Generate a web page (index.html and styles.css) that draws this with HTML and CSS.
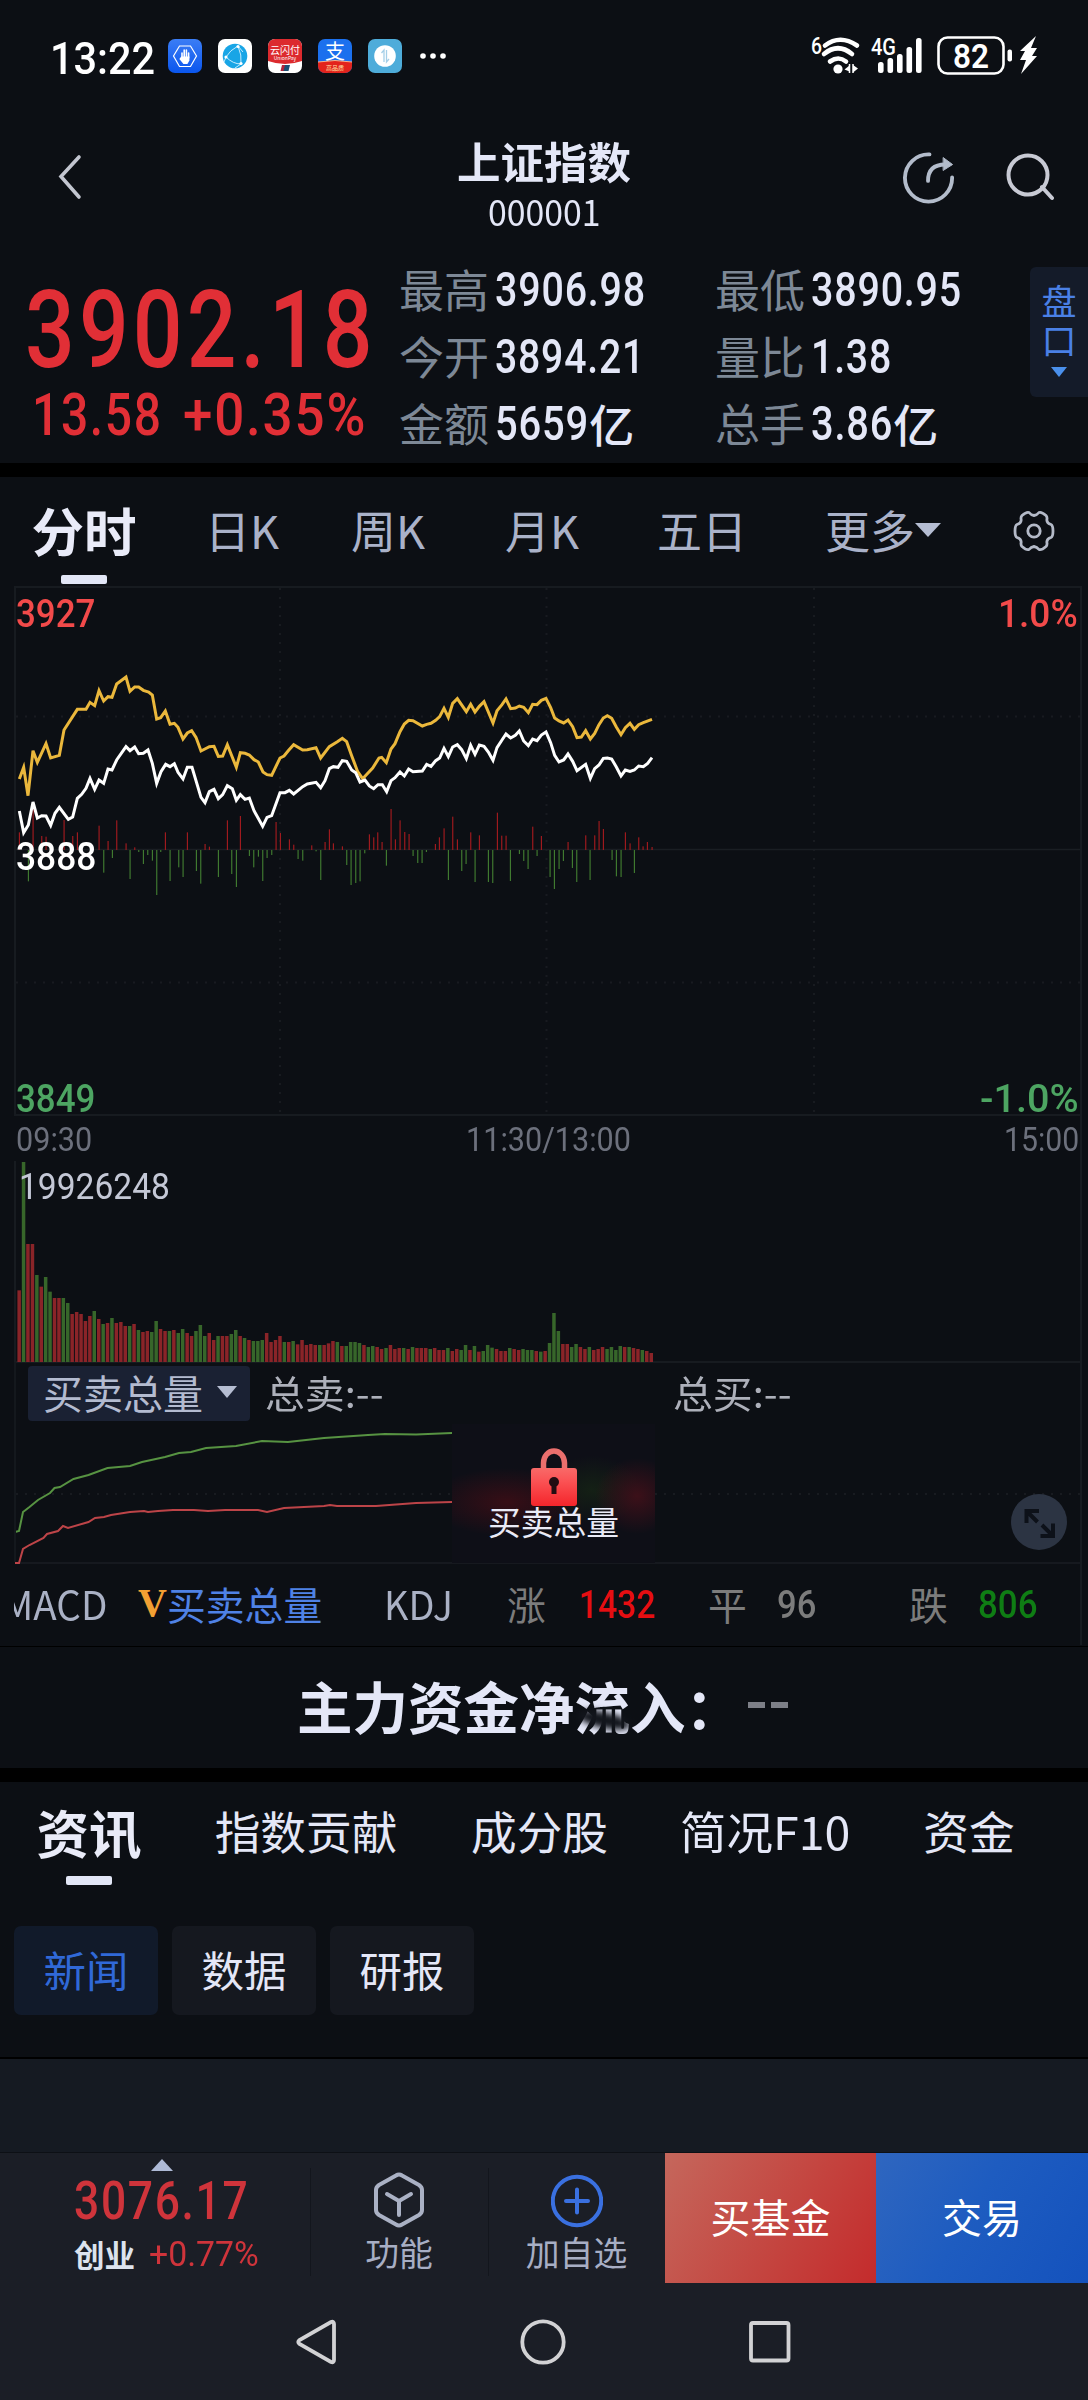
FILE: index.html
```
<!DOCTYPE html>
<html lang="zh-CN">
<head>
    <meta charset="UTF-8">
    <meta name="viewport" content="width=device-width, initial-scale=1.0">
    <title>上证指数 000001</title>
    <link rel="stylesheet" href="styles.css">
</head>
<body>
<div class="phone">

    <!-- Status bar -->
    <div class="status-bar">
        <span class="clock"><span class="num" data-w="105">13:22</span></span>
        <div class="app-icons">
            <svg viewBox="0 0 34 34"><defs><linearGradient id="gb" x2="0" y2="1"><stop stop-color="#3b7df5"/><stop offset="1" stop-color="#0a56ee"/></linearGradient></defs><rect width="34" height="34" rx="7" fill="url(#gb)"/><path d="M11.500 7h11l6 10-6 10.500h-11L5.500 17z" fill="none" stroke="#fff" stroke-width="1.200"/><path d="M14 20v-6M16.200 18v-7M18.400 18v-7M20.600 19v-5" stroke="#fff" stroke-width="1.600" stroke-linecap="round"/><path d="M13.200 17.500h8.200v4l-2 3.500h-4l-4-5z" fill="#fff"/></svg>
            <svg viewBox="0 0 34 34"><rect width="34" height="34" rx="7" fill="#fff"/><circle cx="17" cy="17" r="12.300" fill="#18a5e6"/><path d="M8 18Q12 11 20 7M8 18q7 7 15 7M20 7q4 9 3 18M20 7l5 6M8 18l-2 5M23 25l-6 4" fill="none" stroke="#c5ecff" stroke-width="1"/><circle cx="20" cy="7.500" r="1.600" fill="#fff"/><circle cx="8" cy="18" r="1.600" fill="#fff"/><circle cx="23" cy="24.500" r="1.600" fill="#fff"/></svg>
            <svg viewBox="0 0 34 34"><rect width="34" height="34" rx="7" fill="#fff"/><path d="M0 22V7a7 7 0 0 1 7-7h20a7 7 0 0 1 7 7v15q-17 6-34 0z" fill="#dc2a2e"/><text x="17" y="14.500" class="ic-text" font-size="10">云闪付</text><text x="17" y="20.500" class="ic-text" font-size="5">UnionPay</text><path d="M14 26h4l-1.500 6h-4z" fill="#b0263c"/><path d="M17 26h5l-1.500 6h-5z" fill="#1d4f74"/></svg>
            <svg viewBox="0 0 34 34"><rect width="34" height="34" rx="7" fill="#1b70ee"/><path d="M0 23q17-3 34 0v4a7 7 0 0 1-7 7H7a7 7 0 0 1-7-7z" fill="#e3231c"/><path d="M0 23q17-3 34 0" stroke="#f5b28c" fill="none"/><text x="17" y="20" class="ic-text" font-size="20">支</text><text x="17" y="31" class="ic-text gold" font-size="6">高品质</text></svg>
            <svg viewBox="0 0 34 34"><rect width="34" height="34" rx="7" fill="#4eacda"/><circle cx="17" cy="17" r="10.800" fill="#fff"/><path d="M13.500 14l2.500-3v12M18.500 11v12l2.500-3" fill="none" stroke="#a5cfe8" stroke-width="1.300"/></svg>
        </div>
        <svg class="dots" viewBox="0 0 26 6"><circle cx="3" cy="3" r="2.800"/><circle cx="13" cy="3" r="2.800"/><circle cx="23" cy="3" r="2.800"/></svg>
        <svg class="signals" viewBox="0 0 232 42">
            <text x="0" y="18" class="sig-text" font-size="23" textLength="11" lengthAdjust="spacingAndGlyphs">6</text>
            <g fill="none" stroke="#fff" stroke-width="4.600" stroke-linecap="round">
                <path d="M14 9.500q15-11.500 32 0"/>
                <path d="M13 18q14-11.500 28 0"/>
                <path d="M19 25.500q8.500-6 16 0"/>
            </g>
            <circle cx="27" cy="33" r="4.600"/>
            <path d="M38.500 28v9M42 28v9" stroke="#fff" stroke-width="1.500"/><path d="M33.500 33.500l5-4v6zM42 29l5 3.500-5 4z"/>
            <text x="60" y="18.500" class="sig-text" font-size="23" textLength="25" lengthAdjust="spacingAndGlyphs">4G</text>
            <rect x="67" y="26" width="5.600" height="11" rx="2.500"/>
            <rect x="76.500" y="22" width="5.600" height="15" rx="2.500"/>
            <rect x="86" y="18" width="5.600" height="19" rx="2.500"/>
            <rect x="95.500" y="11" width="5.600" height="26" rx="2.500"/>
            <rect x="105" y="2" width="5.600" height="35" rx="2.500"/>
            <rect x="127.500" y="1.500" width="65" height="36" rx="9" fill="none" stroke="#fff" stroke-width="2.600"/>
            <text x="142" y="31.500" class="sig-text bold" font-size="34" textLength="36" lengthAdjust="spacingAndGlyphs">82</text>
            <rect x="196.500" y="13.500" width="4.500" height="12" rx="2"/>
            <path d="M225 0l-16 15h5l-5 9h6l-5 14 16-18h-5l5-8h-6z"/>
        </svg>
    </div>

    <!-- Title -->
    <header class="title-bar">
        <svg class="back" viewBox="0 0 26 46"><path d="M22 3L4 22.500 22 43"/></svg>
        <div class="title">
            <h1><span data-w="174">上证指数</span></h1>
            <span class="code" data-w="113">000001</span>
        </div>
        <div class="actions">
            <svg class="share" viewBox="0 0 54 54"><path d="M27.500 2.500A24.500 24.500 0 1 0 51 26.500"/><path d="M26 30Q26 13 44 13"/><path class="head" d="M42 6l9.500 7L42 19z"/></svg>
            <svg class="search" viewBox="0 0 48 48"><circle cx="22" cy="22" r="19.500"/><path d="M36 34l10 11"/></svg>
        </div>
    </header>

    <!-- Quote -->
    <section class="quote">
        <div class="price up">
            <span class="big num" data-w="352">3902.18</span>
            <div class="change"><span class="num" data-w="131">13.58</span><span class="num" data-w="184">+0.35%</span></div>
        </div>
        <dl class="stats">
            <div><dt>最高</dt><dd><span class="num" data-w="151">3906.98</span></dd></div>
            <div><dt>最低</dt><dd><span class="num" data-w="151">3890.95</span></dd></div>
            <div><dt>今开</dt><dd><span class="num" data-w="150">3894.21</span></dd></div>
            <div><dt>量比</dt><dd><span class="num" data-w="81">1.38</span></dd></div>
            <div><dt>金额</dt><dd><span class="num" data-w="94">5659</span>亿</dd></div>
            <div><dt>总手</dt><dd><span class="num" data-w="82">3.86</span>亿</dd></div>
        </dl>
        <div class="pankou"><span>盘</span><span>口</span><i class="tri-down"></i></div>
    </section>

    <!-- Time share chart -->
    <nav class="period-tabs">
        <span class="active">分时</span>
        <span>日K</span>
        <span>周K</span>
        <span>月K</span>
        <span>五日</span>
        <span class="more">更多<i class="tri-down"></i></span>
        <svg class="gear" viewBox="-22 -22 44 44"><path d="M0-15.500Q3-16 5-18.500Q7.500-19.500 12-15.500Q13.500-14 12.800-11Q13-7.500 17-6.500Q19-5.500 19 0Q19 5.500 17 6.500Q13 7.500 12.800 11Q13.500 14 12 15.500Q7.500 19.500 5 18.500Q3 16 0 15.500Q-3 16-5 18.500Q-7.500 19.500-12 15.500Q-13.500 14-12.800 11Q-13 7.500-17 6.500Q-19 5.500-19 0Q-19-5.500-17-6.500Q-13-7.500-12.800-11Q-13.500-14-12-15.500Q-7.500-19.500-5-18.500Q-3-16 0-15.500Z"/><circle r="6.200"/></svg>
    </nav>

    <div class="chart-wrap">
        <div class="chart price-chart">
            <svg id="price-svg" viewBox="0 0 1088 528">
                <g class="grid-dots">
                    <path d="M16 130.500H1080M16 396.500H1080M280 2V526M546.500 2V526M814 2V526"/>
                </g>
                <path class="grid-line" d="M16 263.500H1080"/>
                <g id="minute-bars" transform="translate(0 54) scale(.33333)"></g>
                <g class="lines" transform="translate(0 54) scale(.33333)">
                    <polyline class="lead" points="58,417 71,382 84,467 99,332 112,367 138,311 152,354 178,346 192,270 232,208 258,208 270,187 284,197 297,152 311,183 324,170 336,172 350,132 378,111 390,154 404,141 416,141 430,151 446,156 457,165 470,237 482,233 496,213 510,253 523,250 534,262 549,297 562,279 575,272 588,292 603,333 628,320 642,319 655,349 668,348 682,314 709,382 721,338 735,340 748,345 762,359 775,366 789,396 801,404 815,406 840,354 852,348 866,331 881,314 908,330 922,329 948,323 962,354 988,320 1012,305 1027,295 1040,305 1055,347 1073,395 1088,416 1118,384 1137,354 1145,352 1159,368 1173,327 1185,311 1200,275 1213,252 1226,241 1239,242 1267,258 1280,253 1293,250 1307,241 1319,230 1332,205 1345,232 1358,190 1372,176 1399,215 1412,193 1425,216 1438,199 1452,185 1479,249 1491,212 1506,194 1518,177 1532,206 1546,204 1558,198 1571,202 1585,218 1598,193 1611,194 1624,181 1638,175 1652,203 1664,234 1677,243 1691,249 1704,240 1718,260 1731,293 1744,291 1757,272 1771,297 1784,280 1797,254 1810,234 1822,227 1835,235 1849,261 1863,284 1876,263 1890,250 1903,268 1916,254 1930,248 1956,238"/>
                    <polyline class="index" points="58,513 71,578 85,555 99,486 112,534 125,527 138,528 152,556 165,520 178,502 205,538 218,531 232,475 245,463 258,445 270,415 284,448 297,420 311,430 324,387 336,390 350,360 378,320 390,332 404,321 416,341 430,340 444,330 457,370 470,430 483,395 497,373 510,380 523,371 534,397 549,417 562,382 576,382 603,472 615,488 628,455 642,448 655,476 668,464 682,437 697,446 709,481 721,464 735,478 748,474 762,512 788,559 801,532 815,527 840,458 855,458 868,451 881,462 908,440 922,432 948,427 962,443 975,422 988,386 1000,380 1014,382 1027,362 1040,364 1055,390 1067,398 1080,426 1095,420 1108,438 1121,446 1134,434 1147,434 1160,455 1173,422 1185,413 1200,396 1213,408 1226,387 1239,395 1267,393 1280,373 1293,379 1307,362 1319,354 1332,325 1345,350 1358,321 1372,314 1385,329 1399,356 1412,316 1425,343 1438,315 1452,319 1465,336 1479,361 1491,323 1506,300 1518,282 1532,294 1546,286 1558,273 1571,303 1585,317 1598,297 1611,302 1624,285 1638,276 1652,308 1664,346 1677,366 1691,360 1704,342 1718,364 1731,392 1757,373 1771,415 1784,386 1797,375 1810,355 1822,354 1835,357 1849,381 1863,408 1876,390 1890,394 1903,390 1916,378 1930,380 1943,370 1956,353"/>
                </g>
            </svg>
            <span class="lbl tl up num" data-w="79">3927</span>
            <span class="lbl tr up num" data-w="80">1.0%</span>
            <span class="lbl ml num" data-w="80">3888</span>
            <span class="lbl bl down num" data-w="79">3849</span>
            <span class="lbl br down num" data-w="99">-1.0%</span>
        </div>
        <div class="time-axis">
            <span class="num" data-w="76">09:30</span>
            <span class="num" data-w="165">11:30/13:00</span>
            <span class="num" data-w="75">15:00</span>
        </div>
        <div class="chart volume-chart">
            <svg id="volume-svg" viewBox="0 0 1088 201"></svg>
            <span class="lbl vol num" data-w="151">19926248</span>
        </div>
        <div class="sub-head">
            <span class="select">买卖总量<i class="tri-down"></i></span>
            <span class="sum"><span data-w="118">总卖:--</span></span>
            <span class="sum"><span data-w="118">总买:--</span></span>
        </div>
        <div class="chart order-chart">
            <svg viewBox="0 1424 1088 140">
                <path class="grid-dots" d="M16 1494H1080"/>
                <path class="grid-line" d="M16 1563H1080"/>
                <polyline class="sell" points="15,1532 19,1531 23,1512 29.500,1507 38,1500 50,1493 54.500,1488 60,1487 73.500,1479 88.500,1475 107.500,1468 130,1466 142,1462 165,1457 179,1453 191,1452 206,1448 236,1446 262,1441 288,1442 324,1438 368,1435 385,1434 416,1434.500 452,1433"/>
                <polyline class="buy" points="15,1563 19,1563 23,1549 29.500,1545 43.500,1538 47,1534 58,1531 63,1526 68,1528 88.500,1522 95,1518 104,1517 111,1515 130,1512 144,1511 148,1512 158,1511 173,1510 194,1510 208,1511 225,1510 258,1510 267,1512 284,1508 324,1506 330,1505 337,1506 376,1506 416,1503 452,1502"/>
            </svg>
            <div class="locked">
                <svg viewBox="0 0 46 58">
                    <defs><linearGradient id="lk" x2="0" y2="1"><stop stop-color="#f86a68"/><stop offset=".35" stop-color="#fb5254"/><stop offset="1" stop-color="#f4252b"/></linearGradient></defs>
                    <path d="M12.500 22V15a10.500 12 0 0 1 21 0v7" fill="none" stroke="#ea6f6d" stroke-width="5.500"/>
                    <rect y="20" width="46" height="38" rx="3" fill="url(#lk)"/>
                    <circle cx="23" cy="34" r="5" fill="#240d12"/><path d="M20.500 35h5v11h-5z" fill="#240d12"/>
                </svg>
                <span>买卖总量</span>
            </div>
            <svg class="expand" viewBox="0 0 56 56"><circle cx="28" cy="28" r="28"/><path d="M15.500 29V17H28M16 17.500L26.500 28M42 29.500V42H29.500M41.500 41.500L31 31"/></svg>
        </div>
        <div class="indicators">
            <div class="macd"><span data-w="105">MACD</span></div>
            <span class="vip">V</span>
            <span class="cur">买卖总量</span>
            <span class="kdj"><span data-w="69">KDJ</span></span>
            <span class="gray rise">涨</span><span class="n1 num" data-w="77">1432</span>
            <span class="gray flat">平</span><span class="n2 num gray" data-w="39">96</span>
            <span class="gray fall">跌</span><span class="n3 num" data-w="60">806</span>
        </div>
    </div>

    <div class="fund-flow">
        <span class="name">主力资金净流入：<i class="smudge"></i></span><span class="dash"><i></i><i></i></span>
    </div>

    <!-- News -->
    <section class="info">
        <nav class="info-tabs">
            <span class="active">资讯</span>
            <span>指数贡献</span>
            <span>成分股</span>
            <span><span data-w="170">简况F10</span></span>
            <span>资金</span>
        </nav>
        <div class="chips">
            <span class="on">新闻</span>
            <span>数据</span>
            <span>研报</span>
        </div>
    </section>
    <div class="loading-area"></div>

    <!-- Bottom bar -->
    <footer class="bottom-bar">
        <div class="other-index">
            <i class="tri-up"></i>
            <span class="val num" data-w="175">3076.17</span>
            <div class="row"><b>创业</b><span class="num" data-w="110">+0.77%</span></div>
        </div>
        <div class="tool">
            <svg viewBox="0 0 52 58"><path d="M23 4.500q3-2 6 0l17 9.500q3 2 3 5v20q0 3-3 5l-17 9.500q-3 2-6 0L6 44q-3-2-3-5V19q0-3 3-5zM14 23l12 7 12-7M26 30v14"/></svg>
            <span>功能</span>
        </div>
        <div class="tool add">
            <svg viewBox="0 0 52 58"><circle cx="26" cy="30" r="24.200"/><path d="M15 30h22M26 18.500v23"/></svg>
            <span>加自选</span>
        </div>
        <div class="btn fund">买基金</div>
        <div class="btn trade">交易</div>
    </footer>
    <div class="sys-nav">
        <svg viewBox="0 0 40 46"><path d="M35 3Q38 2 38 5V41Q38 44 35 43L3.500 25Q1 23 3.500 21z"/></svg>
        <svg viewBox="0 0 46 46"><circle cx="23" cy="23" r="20.700"/></svg>
        <svg viewBox="0 0 42 42"><rect x="2" y="2" width="37.500" height="37.500" rx="2"/></svg>
    </div>
</div>
<script src="chart.js"></script>
</body>
</html>
```
FILE: styles.css
```
* { box-sizing: border-box; }
body {
    margin: 0;
    background: #0c0f14;
    color: #e4e7f7;
    font-family: "Noto Sans CJK SC", sans-serif;
    line-height: 1;
}
h1, dl, dd { margin: 0; }
i { font-style: normal; }
svg { display: block; flex: none; }
[data-w] { display: inline-block; transform-origin: 0 50%; white-space: nowrap; }
.num { font-family: Roboto, "Noto Sans CJK SC", sans-serif; }
.up { color: #e12f36; }
.down { color: #4da562; }
.gray { color: #7c7c7c; }

.phone { width: 1088px; height: 2400px; display: flex; flex-direction: column; overflow: hidden; }
.phone > * { flex: none; }

.tri-down { display: inline-block; border: solid transparent; border-width: 12px 10px 0; border-top-color: #b5bdd2; }
.tri-up { display: block; border: solid transparent; border-width: 0 11px 12px; border-bottom-color: #aebad6; }

/* Status bar */
.status-bar { height: 112px; display: flex; align-items: center; padding-left: 50px; }
.clock { width: 118px; font-size: 45px; font-weight: 500; color: #fff; }
.app-icons { display: flex; gap: 16px; }
.app-icons svg { width: 34px; height: 34px; }
.ic-text { fill: #fff; text-anchor: middle; font-family: "Noto Sans CJK SC", sans-serif; }
.ic-text.gold { fill: #ffe2a8; }
.dots { width: 26px; height: 6px; margin-left: 18px; fill: #fff; }
.signals { width: 232px; height: 42px; margin-left: 365px; margin-top: 2px; fill: #fff; overflow: visible; }
.sig-text { font-family: Roboto, sans-serif; font-weight: 500; fill: #fff; }
.sig-text.bold { font-weight: 600; }

/* Title bar */
.title-bar { height: 138px; display: flex; position: relative; justify-content: space-between; padding: 26px 34px 0 57px; }
.back { width: 26px; height: 46px; margin-top: 16px; fill: none; stroke: #c3c6d0; stroke-width: 3.6; stroke-linecap: round; }
.title { position: absolute; left: 0; right: 0; top: 27px; display: flex; flex-direction: column; align-items: center; }
.title h1 { font-size: 43px; font-weight: 700; }
.title .code { font-size: 35px; margin-top: 11px; }
.actions { display: flex; gap: 51px; }
.actions svg { fill: none; stroke: #b3bccb; stroke-width: 4; stroke-linecap: round; }
.share { width: 52px; height: 54px; margin-top: 13px; }
.share .head { fill: #b3bccb; stroke-width: 1; }
.search { width: 48px; height: 48px; margin-top: 15px; stroke: #c8cad4 !important; }

/* Quote */
.quote { height: 213px; display: flex; position: relative; }
.price { width: 400px; padding-left: 25px; }
.price .big { display: block; width: max-content; font-size: 107px; font-weight: 500; letter-spacing: 5px; margin-top: 27px; }
.change { display: flex; gap: 20px; margin: 1px 0 0 7px; font-size: 59px; font-weight: 500; letter-spacing: 2px; }
.stats { display: grid; grid-template-columns: 316px 300px; grid-auto-rows: 67px; padding-top: 6px; }
.stats > div { display: flex; align-items: center; }
.stats dt { width: 96px; font-size: 45px; margin: -2px 0 0 -1px; color: #7d8896; }
.stats dd { display: flex; align-items: center; font-size: 45px; font-weight: 500; }
.stats .num { font-size: 48px; letter-spacing: 1px; }
.pankou {
    position: absolute; right: 0; top: 17px; width: 58px; height: 130px;
    display: flex; flex-direction: column; align-items: center;
    padding-top: 15px; gap: 4px;
    background: #141b29; border-radius: 6px 0 0 6px;
    font-size: 35px; color: #4a80e6;
}
.pankou .tri-down { border-width: 10px 8px 0; border-top-color: #4a90ec; margin-top: 7px; }

/* Period tabs */
.period-tabs { height: 123px; border-top: 14px solid #000; padding-bottom: 4px; display: grid; grid-template-columns: 168px 148px 144px 164px 156px 206px 96px; align-items: center; justify-items: center; font-size: 45px; color: #aab2c9; }
.period-tabs .active, .info-tabs .active { position: relative; font-size: 52.5px; font-weight: 700; color: #e9ebf8; }
.period-tabs .active::after, .info-tabs .active::after {
    content: ""; position: absolute; left: 50%; top: 72px; width: 46px; height: 9px; margin-left: -23px;
    background: #e2e6f6; border-radius: 2px;
}
.more { display: flex; align-items: center; }
.more .tri-down { border-width: 14px 13px 0; }
.gear { width: 44px; height: 44px; margin-top: 3px; fill: none; stroke: #b4bac8; stroke-width: 2.8; stroke-linejoin: round; }

/* Charts */
.chart-wrap { position: relative; height: 1060px; }
.chart-wrap::after { content: ""; position: absolute; left: 15px; right: 6px; top: 0; bottom: 1px; border: 2px solid #171b20; border-bottom: 0; border-left: 0; pointer-events: none; }
.chart { position: relative; }
.chart > svg:first-child { width: 1088px; }
.price-chart { height: 528px; }
.price-chart::after { content: ""; position: absolute; left: 14px; right: 6px; top: 0; bottom: -2px; border: 2px solid #171b20; border-right: 0; }
.grid-line { stroke: #1a1e23; stroke-width: 1.500; fill: none; }
.grid-dots { stroke: #181b20; stroke-width: 2; stroke-dasharray: 2 7; fill: none; }
.lines polyline { fill: none; stroke-width: 9; stroke-linejoin: miter; }
.lead { stroke: #ebb83c; }
.index { stroke: #fff; }
.lbl { position: absolute; font-size: 38px; z-index: 1; font-weight: 500; }
.price-chart .up { color: #f24a4a; }
.tl { left: 16px; top: 9px; }
.tr { left: 998px; top: 9px; }
.ml { left: 16px; top: 252px; color: #fff; font-weight: 500; }
.bl { left: 16px; top: 494px; }
.br { left: 980px; top: 494px; }
.time-axis { height: 47px; display: flex; align-items: center; justify-content: space-between; padding: 4px 9px 0 16px; font-size: 33px; color: #6c707c; }
.volume-chart { height: 201px; }
.volume-chart::after { content: ""; position: absolute; left: 14px; right: 7px; top: 0; bottom: -1px; border: solid #171b20; border-width: 0 0 2px 2px; z-index: -1; }
.vol { left: 19px; top: 8px; font-size: 36px; font-weight: 400; color: #c4c8d6; }
.bar-up { fill: #8a2428; }
.bar-down { fill: #37662a; }
.min-up { fill: #a01a1e; }
.min-down { fill: #407a30; }

.sub-head { height: 62px; display: flex; align-items: center; padding: 0 0 0 28px; font-size: 37.500px; color: #adb0ba; }
.select { width: 222px; height: 55px; display: flex; align-items: center; padding: 0 0 3px 15px; gap: 14px; background: #1a2133; border-radius: 4px; font-size: 40px; color: #b3bbd0; }
.sum { width: 408px; padding: 0 0 3px 15px; }

.order-chart { height: 140px; }
.order-chart::before { content: ""; position: absolute; left: 14px; top: -62px; height: 200px; border-left: 2px solid #14181d; }
.order-chart > svg:first-child { height: 140px; }
.sell, .buy { fill: none; stroke-width: 2; }
.sell { stroke: #579342; }
.buy { stroke: #bd4448; }
.locked {
    position: absolute; left: 452px; top: 0; width: 203px; height: 139px;
    display: flex; flex-direction: column; align-items: center;
    padding-top: 24px;
    background:
        radial-gradient(ellipse 42px 38px at 185px 72px, #3c1019, transparent),
        radial-gradient(ellipse 50px 34px at 140px 66px, #142015, transparent),
        radial-gradient(ellipse 80px 34px at 55px 78px, #370e16, transparent),
        #0e0f17;
    font-size: 32.800px; color: #e9eaf6;
}
.locked svg { width: 46px; height: 58px; }
.locked span { margin-top: -1px; }
.expand { position: absolute; left: 1011px; top: 70px; width: 56px; height: 56px; fill: #2c3443; }
.expand path { fill: none; stroke: #0d1119; stroke-width: 4; }

.indicators { height: 81px; display: flex; align-items: center; padding: 0 0 3px 14px; font-size: 38.800px; color: #aab1c5; position: relative; }
.macd { width: 93px; height: 60px; line-height: 60px; overflow: hidden; font-size: 40px; }
.macd span { margin-left: -12px !important; }
.vip { width: 60px; padding-left: 31px; font-family: "Liberation Serif", serif; font-weight: 700; font-size: 40px; color: #f2a033; }
.cur { width: 217px; color: #4f82e6; }
.kdj { width: 123px; font-size: 40px; }
.indicators .num { font-size: 39px; font-weight: 500; position: absolute; top: 22px; }
.rise { width: 201px; }
.flat { width: 201px; }
.n1 { left: 579px; color: #e60e12; }
.n2 { left: 777px; }
.n3 { left: 978px; color: #0f7d14; }

/* Fund flow */
.fund-flow { height: 122px; border-top: 1px solid #000; display: flex; align-items: center; padding-left: 297px; }
.fund-flow .name { position: relative; font-size: 55.500px; font-weight: 700; width: 451px; margin-top: -4px; white-space: nowrap; }
.smudge { position: absolute; left: 280px; top: 34px; width: 54px; height: 16px; border-radius: 50%; background: #12151c; transform: rotate(12deg); filter: blur(3px); }
.dash { display: flex; gap: 6px; margin-top: -5px; }
.dash i { width: 17px; height: 6px; background: #7d7f87; }

/* Info */
.info { height: 291px; border-top: 14px solid #000; border-bottom: 2px solid #000; }
.info-tabs { height: 102px; padding-bottom: 4px; display: grid; grid-template-columns: 178px 256px 211px 241px 166px; align-items: center; justify-items: center; font-size: 45.700px; }
.info-tabs .active::after { top: 71px; }
.chips { display: flex; gap: 14px; padding: 42px 14px 0; }
.chips span { width: 144px; height: 89px; line-height: 86px; text-align: center; border-radius: 7px; background: #15181f; font-size: 42.500px; }
.chips .on { background: #111a2a; color: #3069d8; }
.loading-area { height: 94px; background: #151a22; border-bottom: 1px solid #0d1015; }

/* Bottom bar */
.bottom-bar { height: 130px; display: flex; background: #1b1e26; position: relative; }
.other-index { width: 310px; padding: 6px 0 0 74px; position: relative; color: #cf343b; }
.tri-up { position: absolute; left: 151px; top: 6px; }
.other-index .val { display: block; width: max-content; font-size: 53px; font-weight: 500; letter-spacing: 2px; margin-top: 16px; }
.other-index .row { display: flex; align-items: center; gap: 14px; margin-top: 9px; font-size: 35px; }
.other-index b { font-size: 30.500px; color: #dce3ee; }
.tool { width: 178px; display: flex; flex-direction: column; align-items: center; padding-top: 18px; font-size: 33.800px; color: #a7aec4; position: relative; }
.tool.add { width: 177px; }
.tool::before { content: ""; position: absolute; left: 0; top: 15px; width: 1px; height: 108px; background: #13161d; }
.tool svg { width: 52px; height: 58px; fill: none; stroke: #aab1c4; stroke-width: 4; stroke-linecap: round; stroke-linejoin: round; }
.tool.add svg { stroke: #3a70e0; }
.tool span { margin-top: 6px; }
.btn { display: flex; align-items: center; justify-content: center; font-size: 40px; color: #fff; padding-bottom: 4px; }
.fund { width: 211px; background: linear-gradient(120deg, #c5675c, #c4433e 60%, #c42b2c); }
.trade { width: 212px; background: linear-gradient(120deg, #2f66bf, #1e5cc0 45%, #1452bd); }

.sys-nav { height: 117px; background: #1b1e26; position: relative; display: flex; align-items: center; padding-left: 296px; }
.sys-nav svg { fill: none; stroke: #d2d2d4; stroke-width: 3.800; }
.sys-nav svg:nth-child(1) { width: 40px; height: 46px; }
.sys-nav svg:nth-child(2) { width: 46px; height: 46px; margin-left: 184px; }
.sys-nav svg:nth-child(3) { width: 42px; height: 42px; margin-left: 183px; }
```
FILE: chart.js
```
// Condense the digits to the width given in data-w
function fitNumbers() {
    document.querySelectorAll('[data-w]').forEach(el => {
        const want = parseFloat(el.dataset.w);
        const real = el.offsetWidth;
        el.style.transform = `scaleX(${want / real})`;
        el.style.marginRight = `${want - real}px`;
    });
}

// Per minute strength bars: x,y pairs, baseline at 628
const minuteBars = '58,577 99,505 125,588 138,590 192,540 218,588 232,577 297,557 324,603 350,541 378,610 404,622 496,577 562,577 615,612 628,620 682,541 721,528 828,546 841,579 868,598 881,614 935,616 975,606 988,568 1000,610 1027,619 1108,583 1121,592 1133,577 1146,606 1173,507 1186,598 1200,541 1214,576 1227,582 1306,612 1318,592 1332,565 1358,530 1372,598 1412,577 1438,586 1492,518 1505,587 1518,587 1598,560 1624,588 1704,606 1757,586 1784,586 1797,543 1810,567 1876,577 1890,610 1916,592 1929,619 1942,606 1956,621 ' +
    '85,724 311,698 337,654 390,717 416,636 430,672 443,645 457,662 470,765 482,636 510,723 536,682 549,711 589,693 602,731 655,711 695,702 709,741 748,648 761,682 775,650 788,723 801,654 815,645 894,657 908,662 948,634 962,720 1040,675 1053,735 1067,729 1080,724 1094,640 1159,677 1239,648 1253,669 1266,669 1279,636 1345,720 1385,693 1398,672 1425,726 1465,726 1478,729 1531,723 1558,642 1571,663 1584,687 1611,648 1650,711 1663,747 1677,687 1690,663 1717,684 1730,726 1770,720 1836,660 1849,709 1863,711 1903,699';

// Volume bars: colour + top edge, baseline at 843, 3 units per pixel
const volumeBars = 'r628 g243 r489 r489 g582 r617 g588 g632 r651 r651 g651 g666 r699 r693 r699 r720 r705 g690 r714 g729 r726 g711 r726 r723 r735 g735 r729 g747 r753 r750 g753 g720 r744 r750 g750 r747 g756 g744 r756 r765 g750 g732 g765 r756 r777 g765 r765 r765 g759 g747 r765 g771 r777 g780 g780 g777 r756 r783 r777 r765 g783 r783 g780 r790 r777 r792 r789 r792 g792 r792 r787 r780 g783 r795 g795 g783 g783 g786 r792 g798 g795 r798 r804 g801 r792 r804 r801 g801 r804 g798 r801 r801 r801 g804 r801 r807 r807 g801 r810 r804 g807 g792 r807 g795 r812 g810 g792 g800 r804 r810 r810 g801 r804 r807 g804 g807 g807 r810 g812 r810 g786 g696 g750 r789 r789 g798 g789 r798 r804 g798 r807 r804 r798 g804 g798 g807 g795 r798 g798 r801 r804 g807 r810 r816';

function drawMinuteBars() {
    const g = document.getElementById('minute-bars');
    g.innerHTML = minuteBars.split(' ').map(p => {
        const [x, y] = p.split(',').map(Number);
        const up = y < 628;
        return `<rect class="${up ? 'min-up' : 'min-down'}" x="${x - 1.5}" y="${up ? y : 630}" width="3.5" height="${up ? 630 - y : y - 630}"/>`;
    }).join('');
}

function drawVolume() {
    const svg = document.getElementById('volume-svg');
    svg.innerHTML = volumeBars.split(' ').map((b, i) => {
        const h = (843 - Number(b.slice(1))) / 3;
        const x = 17.4 + i * 4.42;
        return `<rect class="${b[0] === 'r' ? 'bar-up' : 'bar-down'}" x="${x.toFixed(1)}" y="${201 - h}" width="3.5" height="${h}"/>`;
    }).join('');
}

drawMinuteBars();
drawVolume();
fitNumbers();
```
